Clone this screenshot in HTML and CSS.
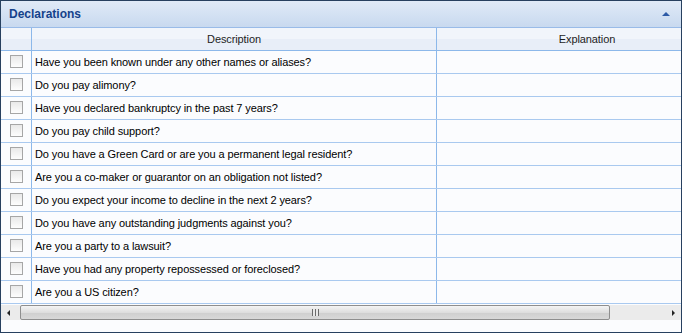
FILE: index.html
```html
<!DOCTYPE html>
<html lang="en">

<head>
    <meta charset="UTF-8">
    <title>Declarations</title>
    <link rel="stylesheet" href="styles.css">
</head>

<body>
    <div class="panel">
        <div class="panel-header">
            <span class="panel-title">Declarations</span>
            <span class="collapse"></span>
        </div>
        <div class="grid">
            <div class="grid-view">
                <table>
                    <tr class="head">
                        <th class="chk-col"></th>
                        <th class="desc-col">Description</th>
                        <th class="expl-col">Explanation</th>
                    </tr>
                    <tr><td><span class="box"></span></td><td>Have you been known under any other names or aliases?</td><td></td></tr>
                    <tr><td><span class="box"></span></td><td>Do you pay alimony?</td><td></td></tr>
                    <tr><td><span class="box"></span></td><td>Have you declared bankruptcy in the past 7 years?</td><td></td></tr>
                    <tr><td><span class="box"></span></td><td>Do you pay child support?</td><td></td></tr>
                    <tr><td><span class="box"></span></td><td>Do you have a Green Card or are you a permanent legal resident?</td><td></td></tr>
                    <tr><td><span class="box"></span></td><td>Are you a co-maker or guarantor on an obligation not listed?</td><td></td></tr>
                    <tr><td><span class="box"></span></td><td>Do you expect your income to decline in the next 2 years?</td><td></td></tr>
                    <tr><td><span class="box"></span></td><td>Do you have any outstanding judgments against you?</td><td></td></tr>
                    <tr><td><span class="box"></span></td><td>Are you a party to a lawsuit?</td><td></td></tr>
                    <tr><td><span class="box"></span></td><td>Have you had any property repossessed or foreclosed?</td><td></td></tr>
                    <tr><td><span class="box"></span></td><td>Are you a US citizen?</td><td></td></tr>
                </table>
            </div>
            <div class="hscroll">
                <span class="arrow left"></span>
                <div class="track">
                    <div class="thumb"><span class="grip"></span></div>
                </div>
                <span class="arrow right"></span>
            </div>
        </div>
    </div>
</body>

</html>
```

FILE: styles.css
```css
body {
    margin: 0;
    font-family: "Liberation Sans", Arial, sans-serif;
    background-color: #fff;
}

.panel {
    width: 680px;
    height: 331px;
    border: 1px solid #27405f;
    display: flex;
    flex-direction: column;
    background: #fbfcfe;
}

.panel-header {
    height: 26px;
    border-bottom: 1px solid #99bbe8;
    background: linear-gradient(#e0eaf7, #c8d9ef);
    display: flex;
    align-items: center;
    justify-content: space-between;
    padding: 0 8px 0 8px;
}

.panel-title {
    font-size: 12px;
    font-weight: bold;
    color: #15428b;
}

.collapse {
    width: 0;
    height: 0;
    border-left: 4px solid transparent;
    border-right: 4px solid transparent;
    border-bottom: 4px solid #2d5aa6;
    margin-right: 3px;
}

.grid {
    flex: 1;
    background: #fbfcfe;
}

.grid-view {
    width: 680px;
    overflow: hidden;
}

table {
    border-collapse: collapse;
    width: 736px;
    table-layout: fixed;
}

th,
td {
    padding: 0;
    font-size: 11px;
    letter-spacing: -0.1px;
    color: #000;
    border-bottom: 1px solid #a9c9ef;
    border-left: 1px solid #8cb8ea;
    height: 22px;
    white-space: nowrap;
    overflow: hidden;
}

tr th:first-child,
tr td:first-child {
    border-left: none;
}

.head th {
    font-weight: normal;
    color: #1e1e1e;
    background: linear-gradient(#f1f5fb 50%, #e8eef8 50%);
    border-bottom: 1px solid #8cb8ea;
}

.chk-col {
    width: 30px;
}

.desc-col {
    width: 404px;
}

td:nth-child(2) {
    padding-left: 3px;
}

td:first-child {
    text-align: center;
}

.box {
    display: inline-block;
    width: 11px;
    height: 11px;
    border: 1px solid #a6a6a6;
    background: linear-gradient(#e9e9e9, #fdfdfd);
    vertical-align: middle;
    margin-top: -2px;
    margin-left: 1px;
}

.hscroll {
    height: 15px;
    margin-top: 1px;
    display: flex;
    align-items: center;
    background: #ebebeb;
}

.arrow {
    width: 0;
    height: 0;
    border-top: 3px solid transparent;
    border-bottom: 3px solid transparent;
}

.arrow.left {
    border-right: 3px solid #222;
    margin: 0 10px 0 6px;
}

.arrow.right {
    border-left: 3px solid #222;
    margin: 0 8px 0 62px;
}

.track {
    flex: 1;
    height: 15px;
}

.thumb {
    width: 588px;
    height: 13px;
    border: 1px solid #8e8e8e;
    border-radius: 2px;
    background: linear-gradient(#f4f4f4, #dedede 50%, #cfcfcf 51%, #d8d8d8);
    display: flex;
    align-items: center;
    justify-content: center;
}

.grip {
    width: 7px;
    height: 7px;
    background: repeating-linear-gradient(90deg, #6b6b6b 0 1px, #e8e8e8 1px 3px);
}
```
